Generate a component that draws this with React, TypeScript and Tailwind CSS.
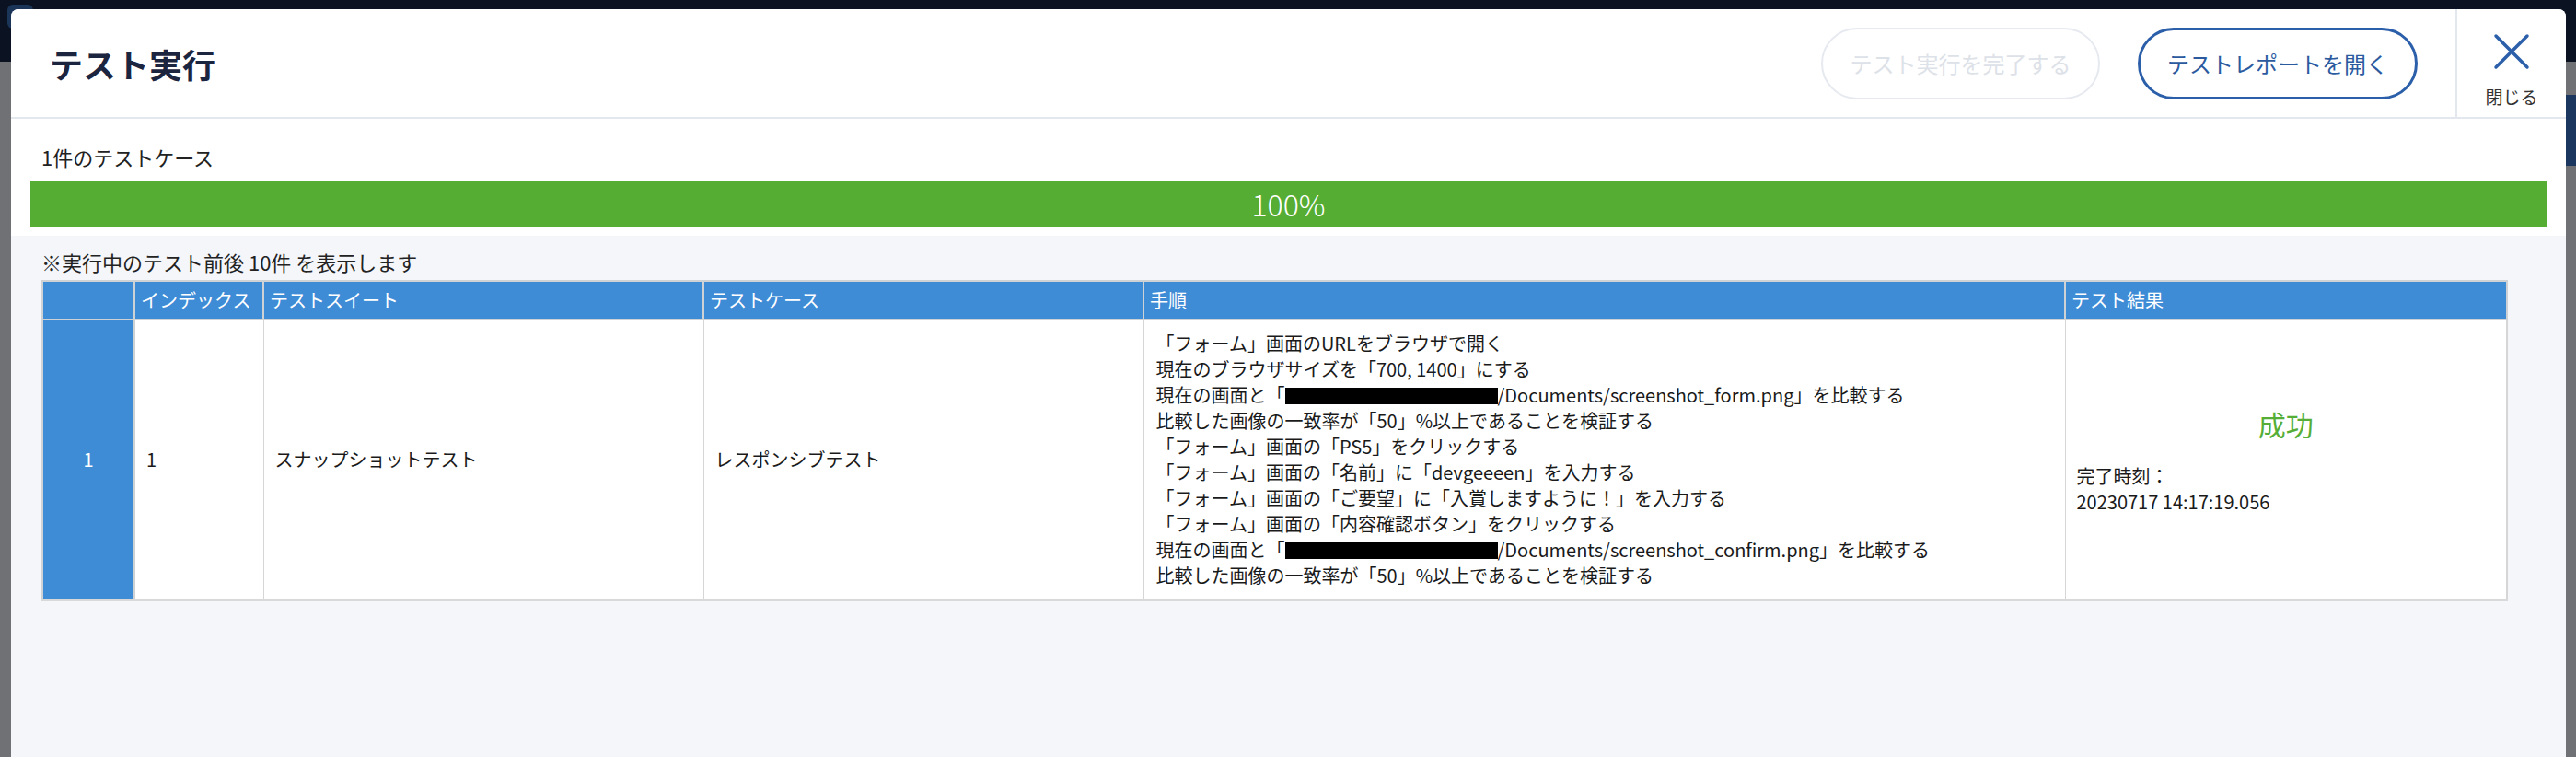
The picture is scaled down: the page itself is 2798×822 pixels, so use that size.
const steps: { before: string; redacted?: boolean; after?: string }[] = [
  { before: '「フォーム」画面のURLをブラウザで開く' },
  { before: '現在のブラウザサイズを「700, 1400」にする' },
  { before: '現在の画面と「', redacted: true, after: '/Documents/screenshot_form.png」を比較する' },
  { before: '比較した画像の一致率が「50」%以上であることを検証する' },
  { before: '「フォーム」画面の「PS5」をクリックする' },
  { before: '「フォーム」画面の「名前」に「devgeeeen」を入力する' },
  { before: '「フォーム」画面の「ご要望」に「入賞しますように！」を入力する' },
  { before: '「フォーム」画面の「内容確認ボタン」をクリックする' },
  { before: '現在の画面と「', redacted: true, after: '/Documents/screenshot_confirm.png」を比較する' },
  { before: '比較した画像の一致率が「50」%以上であることを検証する' },
]

const headers = ['', 'インデックス', 'テストスイート', 'テストケース', '手順', 'テスト結果']

export default function App() {
  return (
    <div className="relative h-[822px] w-full overflow-hidden bg-[#6f7174] font-['Noto_Sans_CJK_JP','Noto_Sans',sans-serif]">
      {/* page behind the dialog */}
      <div className="h-[67px] bg-[#0b1322]" />
      <div className="absolute left-[8px] top-[5px] h-[26px] w-[28px] rounded-md bg-[#1b3558]" />
      <div className="absolute right-0 top-[103px] h-[77px] w-[40px] bg-[#1b365f]" />

      {/* dialog */}
      <div className="absolute bottom-0 left-[12px] right-[11px] top-[10px] flex flex-col overflow-hidden rounded-t-lg bg-[#f4f6fa]">
        <header className="flex h-[119px] shrink-0 items-center border-b-2 border-[#e3e8ef] bg-white">
          <h1 className="pl-[42px] text-[36px] font-bold text-[#1b2540]">テスト実行</h1>
          <div className="ml-auto mr-[41px] flex items-center gap-[41px]">
            <button className="h-[78px] w-[303px] rounded-full border-2 border-[#e6e9ef] text-[24px] text-[#dde1e8]">
              テスト実行を完了する
            </button>
            <button className="h-[78px] w-[304px] rounded-full border-[3px] border-[#2c5fa9] text-[24px] text-[#2b5a9f]">
              テストレポートを開く
            </button>
          </div>
          <div className="flex h-full w-[120px] flex-col items-center justify-center border-l-2 border-[#e3e8ef] pt-[12px]">
            <svg viewBox="0 0 40 40" className="h-[40px] w-[40px]" fill="none" stroke="#2c5fa9" strokeWidth="3.5" strokeLinecap="round">
              <path d="M3 3 L37 37 M37 3 L3 37" />
            </svg>
            <span className="mt-[19px] text-[19px] leading-none text-[#333]">閉じる</span>
          </div>
        </header>

        <section className="bg-white px-[21px] pb-[10px] pt-[26px]">
          <p className="pl-[12px] text-[22px] leading-[30px] text-[#222]">1件のテストケース</p>
          <div className="mt-[11px] flex h-[50px] items-center justify-center bg-[#56ad34] text-[32px] font-light text-white">
            100%
          </div>
        </section>

        <section className="px-[33px] pt-[13px]">
          <p className="text-[22px] leading-[30px] text-[#222]">※実行中のテスト前後 10件 を表示します</p>
          <table className="mt-[5px] w-[2677px] table-fixed border-collapse border-b-[3px] border-[#d9d9d9] bg-white text-[20px] text-[#1a1a1a]">
            <colgroup>
              <col className="w-[100px]" />
              <col className="w-[140px]" />
              <col className="w-[478px]" />
              <col className="w-[478px]" />
              <col className="w-[1001px]" />
              <col className="w-[480px]" />
            </colgroup>
            <thead>
              <tr className="h-[42px]">
                {headers.map((h, i) => (
                  <th
                    key={i}
                    className="border-2 border-[#cfd2d5] bg-[#3e8bd6] px-[6px] text-left text-[20px] font-normal text-white"
                  >
                    {h}
                  </th>
                ))}
              </tr>
            </thead>
            <tbody>
              <tr>
                <td className="border-2 border-[#cfd2d5] bg-[#3e8bd6] text-center text-white">1</td>
                <td className="border border-[#d6d6d6] px-3">1</td>
                <td className="border border-[#d6d6d6] px-3">スナップショットテスト</td>
                <td className="border border-[#d6d6d6] px-3">レスポンシブテスト</td>
                <td className="border border-[#d6d6d6] px-[13px] py-[11px] leading-[28px]">
                  {steps.map((s, i) => (
                    <div key={i} className="whitespace-nowrap">
                      {s.before}
                      {s.redacted && <span className="inline-block h-[18px] w-[231px] bg-black align-[-2px]" />}
                      {s.after}
                    </div>
                  ))}
                </td>
                <td className="border border-r-2 border-[#d6d6d6] px-3 leading-[28px]">
                  <div className="mb-[23px] text-center text-[30px] leading-[40px] text-[#56ae37]">成功</div>
                  <div>完了時刻：</div>
                  <div>20230717 14:17:19.056</div>
                </td>
              </tr>
            </tbody>
          </table>
        </section>
      </div>
    </div>
  )
}
